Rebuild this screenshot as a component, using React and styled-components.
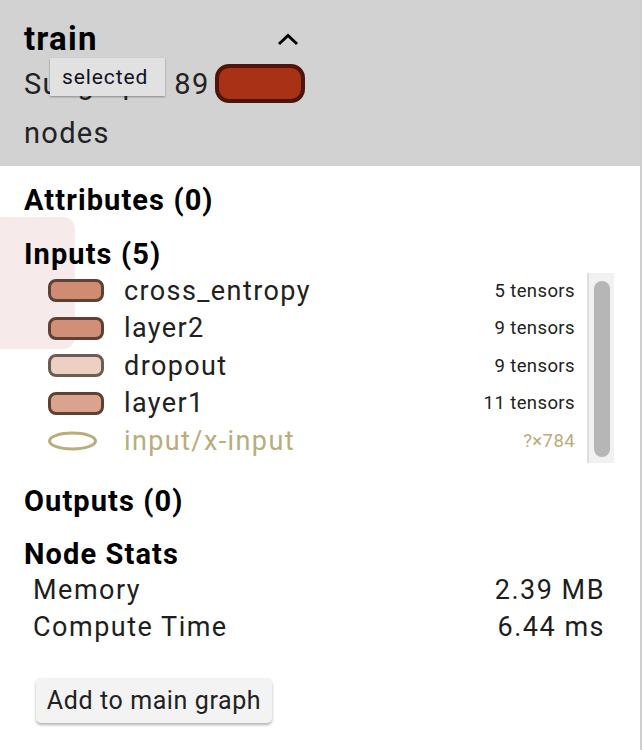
import React from 'react';
import styled, { createGlobalStyle } from 'styled-components';

const Global = createGlobalStyle`
  body {
    margin: 0;
    background: #fff;
    font-family: Roboto, "Liberation Sans", sans-serif;
  }
`

const Card = styled.div`
  position: relative;
  width: 640px;
  height: 750px;
  border-right: 2px solid #cfcfcf;
  overflow: hidden;
`

const Header = styled.div`
  position: relative;
  background: #d2d2d2;
  padding: 19px 0 9px 24px;
  height: 138px;
`

const TitleRow = styled.div`
  display: flex;
  align-items: center;
  width: 275px;
  justify-content: space-between;
  height: 40px;
`

const Title = styled.div`
  font-size: 33px;
  letter-spacing: 1.2px;
  line-height: 40px;
  font-weight: 700;
  color: #000;
`

const SubLine = styled.div`
  display: flex;
  align-items: center;
  gap: 6px;
  height: 49px;
  font-size: 29px;
  letter-spacing: 1.3px;
  color: #222;
`

const NodeShape = styled.span`
  display: inline-block;
  box-sizing: border-box;
  width: ${p => p.w}px;
  height: ${p => p.h}px;
  border: ${p => p.bw}px solid ${p => p.stroke};
  border-radius: ${p => p.r}px;
  background: ${p => p.fill};
  flex-shrink: 0;
`

const Tooltip = styled.div`
  position: absolute;
  left: 50px;
  top: 58px;
  width: 115px;
  height: 38px;
  box-sizing: border-box;
  background: #e1e1e1;
  box-shadow: 0 1px 2px rgba(0, 0, 0, 0.35);
  font-size: 21px;
  letter-spacing: 0.9px;
  line-height: 38px;
  padding-left: 12px;
  color: #111122;
`

const Body = styled.div`
  position: relative;
  isolation: isolate;
  padding: 16px 26px 0 24px;
`

const Highlight = styled.div`
  position: absolute;
  z-index: -1;
  left: 0;
  top: 51px;
  width: 75px;
  height: 132px;
  border-radius: 0 12px 12px 0;
  background: #f6eaea;
  pointer-events: none;
`

const SectionTitle = styled.div`
  font-size: 29px;
  letter-spacing: 1.1px;
  line-height: 36px;
  font-weight: 700;
  color: #000;
  margin-top: ${p => p.mt || 0}px;
`

const InputsBox = styled.div`
  display: flex;
  align-items: flex-start;
`

const InputList = styled.div`
  flex: 1;
`

const InputRow = styled.div`
  display: flex;
  align-items: center;
  height: 37.5px;
  padding-left: 24px;
`

const ShapeCell = styled.div`
  width: 56px;
  display: flex;
  margin-right: 20px;
`

const InputName = styled.div`
  flex: 1;
  font-size: 27px;
  letter-spacing: 1.4px;
  color: ${p => p.muted ? '#b8ad7b' : '#212121'};
`

const Count = styled.div`
  font-size: 18.5px;
  letter-spacing: 0.4px;
  color: ${p => p.muted ? '#b8ad7b' : '#222'};
`

const Track = styled.div`
  width: 27px;
  height: 190px;
  margin-left: 12px;
  margin-top: 1px;
  border-left: 2px solid #dedede;
  background: #f1f1f1;
  padding: 8px 0 6px 5px;
  box-sizing: border-box;
`

const Thumb = styled.div`
  width: 16px;
  height: 100%;
  border-radius: 8px;
  background: #b6b6b6;
`

const StatRow = styled.div`
  display: flex;
  justify-content: space-between;
  height: 37px;
  line-height: 37px;
  font-size: 27px;
  letter-spacing: 1.5px;
  color: #1e1e1e;
  margin: 0 9px 0 9px;
`

const Button = styled.button`
  display: block;
  margin: 32px 0 0 12px;
  width: 236px;
  height: 45px;
  border: none;
  border-radius: 5px;
  background: #f3f3f3;
  box-shadow: 0 2px 3px rgba(0, 0, 0, 0.3);
  font-family: Roboto, "Liberation Sans", sans-serif;
  font-size: 25px;
  letter-spacing: 0.6px;
  color: #212121;
  padding: 0;
`

const Chevron = () => (
  <svg width="22" height="14" viewBox="0 0 22 14">
    <polyline points="2,12 11,3.5 20,12" fill="none" stroke="#000" strokeWidth="3" />
  </svg>
)

const inputs = [
  { name: 'cross_entropy', count: '5 tensors', fill: '#cf8c73', stroke: '#5e4035' },
  { name: 'layer2', count: '9 tensors', fill: '#d08f76', stroke: '#5e4035' },
  { name: 'dropout', count: '9 tensors', fill: '#ecd0c2', stroke: '#6d5c55' },
  { name: 'layer1', count: '11 tensors', fill: '#daa38d', stroke: '#5e4035' },
]

export default function App() {
  return (
    <Card>
      <Global />
      <Header>
        <TitleRow>
          <Title>train</Title>
          <Chevron />
        </TitleRow>
        <SubLine>
          <span>Subgraph: 89</span>
          <NodeShape w={90} h={39} bw={4} r={14} fill="#a93216" stroke="#4f150c" />
        </SubLine>
        <SubLine>nodes</SubLine>
        <Tooltip>selected</Tooltip>
      </Header>
      <Body>
        <Highlight />
        <SectionTitle>Attributes (0)</SectionTitle>
        <SectionTitle mt={18}>Inputs (5)</SectionTitle>
        <InputsBox>
          <InputList>
            {inputs.map(i => (
              <InputRow key={i.name}>
                <ShapeCell>
                  <NodeShape w={56} h={23} bw={3} r={8} fill={i.fill} stroke={i.stroke} />
                </ShapeCell>
                <InputName>{i.name}</InputName>
                <Count>{i.count}</Count>
              </InputRow>
            ))}
            <InputRow>
              <ShapeCell>
                <svg width="50" height="22" viewBox="0 0 50 22">
                  <ellipse cx="24.5" cy="11" rx="23" ry="8" fill="none" stroke="#b8ad7b" strokeWidth="3" />
                </svg>
              </ShapeCell>
              <InputName muted>input/x-input</InputName>
              <Count muted>?×784</Count>
            </InputRow>
          </InputList>
          <Track><Thumb /></Track>
        </InputsBox>
        <SectionTitle mt={20}>Outputs (0)</SectionTitle>
        <SectionTitle mt={17}>Node Stats</SectionTitle>
        <StatRow><span>Memory</span><span>2.39 MB</span></StatRow>
        <StatRow><span>Compute Time</span><span>6.44 ms</span></StatRow>
        <Button>Add to main graph</Button>
      </Body>
    </Card>
  );
}
